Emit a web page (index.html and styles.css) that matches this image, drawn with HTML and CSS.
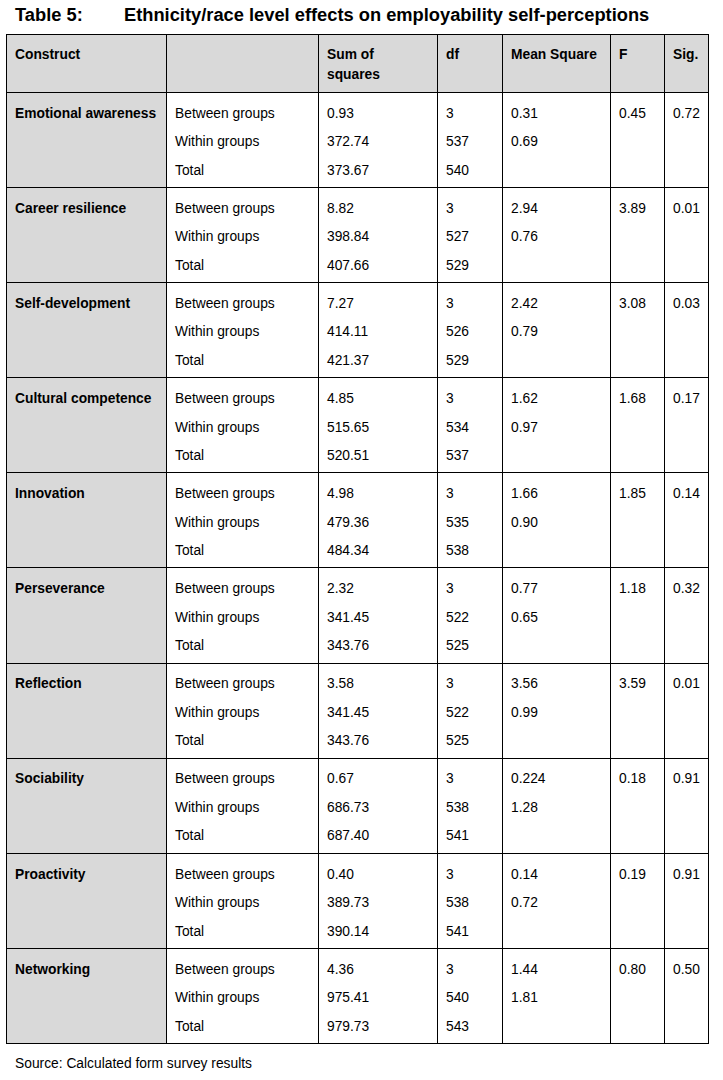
FILE: index.html
```html
<!DOCTYPE html>
<html lang="en">
<head>
<meta charset="utf-8">
<title>Table 5</title>
<link rel="stylesheet" href="styles.css">
</head>
<body>
<div class="page">
  <div class="caption"><span class="label">Table 5:</span><span class="title">Ethnicity/race level effects on employability self-perceptions</span></div>
  <div class="table" role="table">
    <div class="row head" role="row">
      <div class="cell c1">Construct</div>
      <div class="cell c2"></div>
      <div class="cell c3"><div class="ln">Sum of</div><div class="ln">squares</div></div>
      <div class="cell c4">df</div>
      <div class="cell c5">Mean Square</div>
      <div class="cell c6">F</div>
      <div class="cell c7">Sig.</div>
    </div>

    <div class="row body" role="row">
      <div class="cell c1">Emotional awareness</div>
      <div class="cell c2"><div class="ln">Between groups</div><div class="ln">Within groups</div><div class="ln">Total</div></div>
      <div class="cell c3"><div class="ln">0.93</div><div class="ln">372.74</div><div class="ln">373.67</div></div>
      <div class="cell c4"><div class="ln">3</div><div class="ln">537</div><div class="ln">540</div></div>
      <div class="cell c5"><div class="ln">0.31</div><div class="ln">0.69</div></div>
      <div class="cell c6">0.45</div>
      <div class="cell c7">0.72</div>
    </div>

    <div class="row body" role="row">
      <div class="cell c1">Career resilience</div>
      <div class="cell c2"><div class="ln">Between groups</div><div class="ln">Within groups</div><div class="ln">Total</div></div>
      <div class="cell c3"><div class="ln">8.82</div><div class="ln">398.84</div><div class="ln">407.66</div></div>
      <div class="cell c4"><div class="ln">3</div><div class="ln">527</div><div class="ln">529</div></div>
      <div class="cell c5"><div class="ln">2.94</div><div class="ln">0.76</div></div>
      <div class="cell c6">3.89</div>
      <div class="cell c7">0.01</div>
    </div>

    <div class="row body" role="row">
      <div class="cell c1">Self-development</div>
      <div class="cell c2"><div class="ln">Between groups</div><div class="ln">Within groups</div><div class="ln">Total</div></div>
      <div class="cell c3"><div class="ln">7.27</div><div class="ln">414.11</div><div class="ln">421.37</div></div>
      <div class="cell c4"><div class="ln">3</div><div class="ln">526</div><div class="ln">529</div></div>
      <div class="cell c5"><div class="ln">2.42</div><div class="ln">0.79</div></div>
      <div class="cell c6">3.08</div>
      <div class="cell c7">0.03</div>
    </div>

    <div class="row body" role="row">
      <div class="cell c1">Cultural competence</div>
      <div class="cell c2"><div class="ln">Between groups</div><div class="ln">Within groups</div><div class="ln">Total</div></div>
      <div class="cell c3"><div class="ln">4.85</div><div class="ln">515.65</div><div class="ln">520.51</div></div>
      <div class="cell c4"><div class="ln">3</div><div class="ln">534</div><div class="ln">537</div></div>
      <div class="cell c5"><div class="ln">1.62</div><div class="ln">0.97</div></div>
      <div class="cell c6">1.68</div>
      <div class="cell c7">0.17</div>
    </div>

    <div class="row body" role="row">
      <div class="cell c1">Innovation</div>
      <div class="cell c2"><div class="ln">Between groups</div><div class="ln">Within groups</div><div class="ln">Total</div></div>
      <div class="cell c3"><div class="ln">4.98</div><div class="ln">479.36</div><div class="ln">484.34</div></div>
      <div class="cell c4"><div class="ln">3</div><div class="ln">535</div><div class="ln">538</div></div>
      <div class="cell c5"><div class="ln">1.66</div><div class="ln">0.90</div></div>
      <div class="cell c6">1.85</div>
      <div class="cell c7">0.14</div>
    </div>

    <div class="row body" role="row">
      <div class="cell c1">Perseverance</div>
      <div class="cell c2"><div class="ln">Between groups</div><div class="ln">Within groups</div><div class="ln">Total</div></div>
      <div class="cell c3"><div class="ln">2.32</div><div class="ln">341.45</div><div class="ln">343.76</div></div>
      <div class="cell c4"><div class="ln">3</div><div class="ln">522</div><div class="ln">525</div></div>
      <div class="cell c5"><div class="ln">0.77</div><div class="ln">0.65</div></div>
      <div class="cell c6">1.18</div>
      <div class="cell c7">0.32</div>
    </div>

    <div class="row body" role="row">
      <div class="cell c1">Reflection</div>
      <div class="cell c2"><div class="ln">Between groups</div><div class="ln">Within groups</div><div class="ln">Total</div></div>
      <div class="cell c3"><div class="ln">3.58</div><div class="ln">341.45</div><div class="ln">343.76</div></div>
      <div class="cell c4"><div class="ln">3</div><div class="ln">522</div><div class="ln">525</div></div>
      <div class="cell c5"><div class="ln">3.56</div><div class="ln">0.99</div></div>
      <div class="cell c6">3.59</div>
      <div class="cell c7">0.01</div>
    </div>

    <div class="row body" role="row">
      <div class="cell c1">Sociability</div>
      <div class="cell c2"><div class="ln">Between groups</div><div class="ln">Within groups</div><div class="ln">Total</div></div>
      <div class="cell c3"><div class="ln">0.67</div><div class="ln">686.73</div><div class="ln">687.40</div></div>
      <div class="cell c4"><div class="ln">3</div><div class="ln">538</div><div class="ln">541</div></div>
      <div class="cell c5"><div class="ln">0.224</div><div class="ln">1.28</div></div>
      <div class="cell c6">0.18</div>
      <div class="cell c7">0.91</div>
    </div>

    <div class="row body" role="row">
      <div class="cell c1">Proactivity</div>
      <div class="cell c2"><div class="ln">Between groups</div><div class="ln">Within groups</div><div class="ln">Total</div></div>
      <div class="cell c3"><div class="ln">0.40</div><div class="ln">389.73</div><div class="ln">390.14</div></div>
      <div class="cell c4"><div class="ln">3</div><div class="ln">538</div><div class="ln">541</div></div>
      <div class="cell c5"><div class="ln">0.14</div><div class="ln">0.72</div></div>
      <div class="cell c6">0.19</div>
      <div class="cell c7">0.91</div>
    </div>

    <div class="row body" role="row">
      <div class="cell c1">Networking</div>
      <div class="cell c2"><div class="ln">Between groups</div><div class="ln">Within groups</div><div class="ln">Total</div></div>
      <div class="cell c3"><div class="ln">4.36</div><div class="ln">975.41</div><div class="ln">979.73</div></div>
      <div class="cell c4"><div class="ln">3</div><div class="ln">540</div><div class="ln">543</div></div>
      <div class="cell c5"><div class="ln">1.44</div><div class="ln">1.81</div></div>
      <div class="cell c6">0.80</div>
      <div class="cell c7">0.50</div>
    </div>
  </div>
  <div class="source">Source: Calculated form survey results</div>
</div>
</body>
</html>
```

FILE: styles.css
```css
html, body {
  margin: 0;
  padding: 0;
  background: #ffffff;
}

body {
  font-family: "Liberation Sans", Arial, sans-serif;
  font-size: 13.8px;
  color: #000000;
}

.page {
  padding-top: 4px;
}

.caption {
  display: flex;
  padding-left: 15px;
  font-size: 18.3px;
  font-weight: bold;
  line-height: 22px;
}

.caption .label {
  width: 109px;
  flex: none;
}

.table {
  margin-top: 8px;
  margin-left: 6px;
  width: 703px;
  box-sizing: border-box;
  border-left: 1px solid #000;
  border-top: 1px solid #000;
}

.row {
  display: grid;
  grid-template-columns: 160px 152px 119px 65px 108px 54px 44px;
  border-bottom: 1px solid #000;
}

.cell {
  box-sizing: border-box;
  border-right: 1px solid #000;
  padding-left: 8px;
}

.head .cell {
  background: #d9d9d9;
  font-weight: bold;
  line-height: 20px;
  padding-top: 10.4px;
  padding-bottom: 6.6px;
}

.body .cell {
  line-height: 28.5px;
  padding-top: 6.8px;
  padding-bottom: 1.8px;
}

.body .c1 {
  background: #d9d9d9;
  font-weight: bold;
}

.source {
  margin-top: 12.5px;
  padding-left: 15px;
  line-height: 16px;
}
```
